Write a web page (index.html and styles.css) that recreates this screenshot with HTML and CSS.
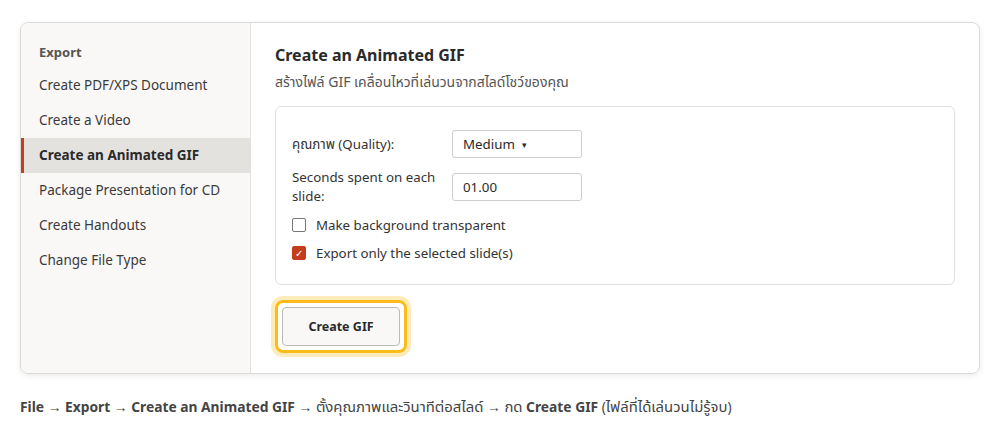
FILE: index.html
```html
<!DOCTYPE html>
<html lang="th">
<head>
    <meta charset="UTF-8">
    <title>Export - Create an Animated GIF</title>
    <link rel="stylesheet" href="styles.css">
</head>
<body>
    <div class="panel">
        <div class="sidebar">
            <div class="side-title">Export</div>
            <div class="side-item">Create PDF/XPS Document</div>
            <div class="side-item">Create a Video</div>
            <div class="side-item active">Create an Animated GIF</div>
            <div class="side-item">Package Presentation for CD</div>
            <div class="side-item">Create Handouts</div>
            <div class="side-item">Change File Type</div>
        </div>
        <div class="main">
            <h1 class="main-title">Create an Animated GIF</h1>
            <p class="main-sub">สร้างไฟล์ GIF เคลื่อนไหวที่เล่นวนจากสไลด์โชว์ของคุณ</p>
            <div class="options">
                <div class="row">
                    <label class="row-label">คุณภาพ (Quality):</label>
                    <div class="field">Medium <span class="caret">▾</span></div>
                </div>
                <div class="row">
                    <label class="row-label">Seconds spent on each slide:</label>
                    <div class="field">01.00</div>
                </div>
                <div class="check">
                    <span class="box"></span>
                    Make background transparent
                </div>
                <div class="check">
                    <span class="box checked">✓</span>
                    Export only the selected slide(s)
                </div>
            </div>
            <div class="focus-ring">
                <button class="btn">Create GIF</button>
            </div>
        </div>
    </div>
    <p class="path"><b>File → Export → Create an Animated GIF</b> → <span class="th">ตั้งคุณภาพและวินาทีต่อสไลด์</span> → <span class="th">กด</span> <b>Create GIF</b> (<span class="th">ไฟล์ที่ได้เล่นวนไม่รู้จบ</span>)</p>
</body>
</html>
```

FILE: styles.css
```css
body {
    margin: 0;
    padding: 22px 20px 0 20px;
    font-family: "Noto Sans", "Noto Sans Thai", "Liberation Sans", sans-serif;
    background: #fff;
    color: #333;
}
.panel {
    display: flex;
    height: 350px;
    border: 1px solid #dcdad7;
    border-radius: 8px;
    box-shadow: 0 2px 6px rgba(0, 0, 0, 0.08);
    overflow: hidden;
}
.sidebar {
    width: 229px;
    background: #f9f8f6;
    border-right: 1px solid #e2e0dd;
    padding-top: 19px;
}
.side-title {
    font-size: 13px;
    font-weight: bold;
    color: #555;
    padding: 0 18px;
    height: 20px;
    line-height: 20px;
    margin-bottom: 6px;
}
.side-item {
    font-size: 13.5px;
    color: #3a3a3a;
    height: 35px;
    line-height: 35px;
    padding-left: 18px;
    border-left: 3px solid transparent;
    margin-left: -3px;
}
.side-item.active {
    margin-left: 0;
    padding-left: 15px;
    border-left-color: #c43e1c;
    background: #e4e2df;
    font-weight: bold;
    color: #2a2a2a;
}
.main {
    flex: 1;
    padding: 20px 24px 0 24px;
}
.main-title {
    font-size: 16px;
    font-weight: bold;
    color: #2a2a2a;
    margin: 0;
    line-height: 24px;
}
.main-sub {
    font-size: 14px;
    color: #555;
    margin: 5px 0 14px 0;
    line-height: 20px;
}
.options {
    border: 1px solid #e2e0dd;
    border-radius: 6px;
    padding: 23px 16px 22px 16px;
    display: flex;
    flex-direction: column;
    gap: 10px;
}
.row {
    display: flex;
    align-items: center;
}
.row-label {
    width: 160px;
    font-size: 13.3px;
    color: #333;
    line-height: 19px;
}
.field {
    width: 108px;
    height: 26px;
    border: 1px solid #cfcdca;
    border-radius: 3px;
    padding: 0 10px;
    line-height: 26px;
    font-size: 13.3px;
    color: #2a2a2a;
}
.caret {
    font-size: 9px;
    margin-left: 4px;
    vertical-align: 1px;
}
.check {
    display: flex;
    align-items: center;
    gap: 10px;
    font-size: 13.3px;
    color: #333;
    height: 18px;
}
.box {
    width: 12px;
    height: 12px;
    border: 1px solid #777;
    border-radius: 2px;
    display: inline-block;
    text-align: center;
    font-size: 10px;
    line-height: 12px;
    color: #fff;
}
.box.checked {
    background: #c43e1c;
    border-color: #c43e1c;
}
.focus-ring {
    display: inline-block;
    margin-top: 15px;
    padding: 4px;
    border: 3px solid #fbbc1a;
    border-radius: 8px;
    box-shadow: 0 0 0 4px rgba(251, 188, 26, 0.3);
}
.btn {
    width: 118px;
    height: 39px;
    background: #f9f8f6;
    border: 1px solid #bdbbb8;
    border-radius: 4px;
    font-family: inherit;
    font-size: 12.5px;
    font-weight: bold;
    color: #2a2a2a;
    display: block;
}
.path {
    margin: 22px 0 0 0;
    font-size: 13.8px;
    color: #444;
}
.path b {
    color: #444;
}
.th {
    font-size: 1.08em;
}
```
